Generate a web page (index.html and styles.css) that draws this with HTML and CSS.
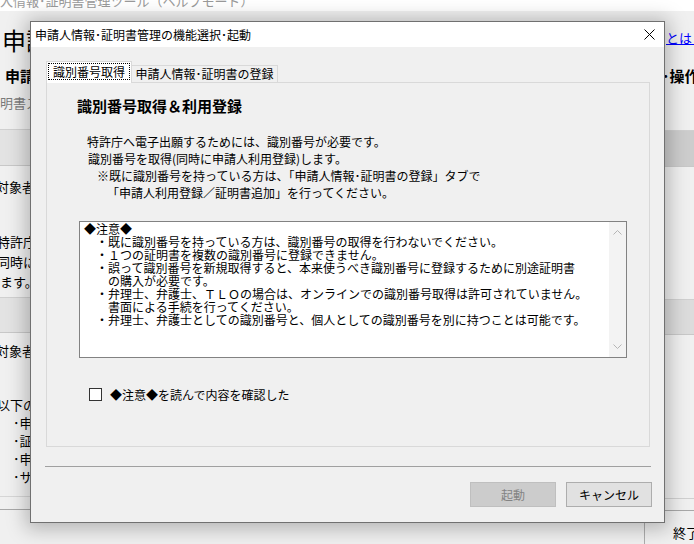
FILE: index.html
```html
<!DOCTYPE html>
<html>
<head>
    <meta http-equiv="Content-Type" content="text/html; charset=utf-8" />
    <title>申請人情報･証明書管理の機能選択･起動</title>
    <link rel="stylesheet" href="styles.css">
</head>
<body>
  <div class="app">
    <div class="app-title"><span>人情報･証明書管理ツール（ヘルプモード）</span></div>
    <div class="client">
      <div class="main-col">
        <div class="big-title">申請人情報</div>
        <div class="sub-title">申請人情報</div>
        <div class="note">明書スロット</div>
        <div class="band band-first"></div>
        <div class="row-label">対象者</div>
        <div class="para">
          <div>特許庁へ電子出願</div>
          <div>同時に申請人利用</div>
          <div class="flush">ます。</div>
        </div>
        <div class="band band-second"></div>
        <div class="row-label second">対象者</div>
        <div class="list">
          <div class="list-head">以下の</div>
          <div class="list-item">･申請人</div>
          <div class="list-item">･証明書</div>
          <div class="list-item">･申請人</div>
          <div class="list-item">･サービス</div>
        </div>
        <div class="rule rule-light"></div>
        <div class="rule rule-dark"></div>
      </div>

      <div class="side-col">
        <a class="help-link" href="#">とは？</a>
        <div class="side-title">･操作</div>
        <div class="band side-band-first"></div>
        <div class="band side-band-second"></div>
        <div class="rule side-rule-light"></div>
        <div class="rule side-rule-dark"></div>
        <div class="exit-button">終了</div>
      </div>
    </div>
  </div>

  <!-- 機能選択ダイアログ -->
  <div class="dialog">
    <div class="dialog-title">
      <span>申請人情報･証明書管理の機能選択･起動</span>
      <svg class="close-icon" width="11" height="11" viewBox="0 0 11 11">
        <path d="M0.5 0.5 L10.5 10.5 M10.5 0.5 L0.5 10.5" stroke="#000" stroke-width="1" fill="none"/>
      </svg>
    </div>

    <div class="dialog-body">
      <div class="tabs">
        <div class="tab active"><span class="focus">識別番号取得</span></div>
        <div class="tab">申請人情報･証明書の登録</div>
      </div>

      <div class="tab-panel">
        <div class="panel-heading">識別番号取得＆利用登録</div>
        <div class="intro">
          <div>特許庁へ電子出願するためには、識別番号が必要です。</div>
          <div class="indent-1">識別番号を取得(同時に申請人利用登録)します。</div>
          <div class="indent-2">※既に識別番号を持っている方は、「申請人情報･証明書の登録」タブで</div>
          <div class="indent-3">「申請人利用登録／証明書追加」を行ってください。</div>
        </div>

        <div class="notice-box">
          <div class="notice-text">◆注意◆
　・既に識別番号を持っている方は、識別番号の取得を行わないでください。
　・１つの証明書を複数の識別番号に登録できません。
　・誤って識別番号を新規取得すると、本来使うべき識別番号に登録するために別途証明書
　　の購入が必要です。
　・弁理士、弁護士、ＴＬＯの場合は、オンラインでの識別番号取得は許可されていません。
　　書面による手続を行ってください。
　・弁理士、弁護士としての識別番号と、個人としての識別番号を別に持つことは可能です。</div>
          <div class="scrollbar">
            <svg width="9" height="5" viewBox="0 0 9 5"><path d="M0.5 4.5 L4.5 0.5 L8.5 4.5" stroke="#b5b5b5" fill="none"/></svg>
            <svg width="9" height="5" viewBox="0 0 9 5"><path d="M0.5 0.5 L4.5 4.5 L8.5 0.5" stroke="#b5b5b5" fill="none"/></svg>
          </div>
        </div>

        <label class="confirm">
          <span class="checkbox"></span>
          <span>◆注意◆を読んで内容を確認した</span>
        </label>
      </div>

      <div class="separator"></div>

      <div class="footer">
        <button class="btn" disabled>起動</button>
        <button class="btn">キャンセル</button>
      </div>
    </div>
  </div>
</body>
</html>
```

FILE: styles.css
```css
body {
    margin: 0;
    width: 694px;
    height: 544px;
    overflow: hidden;
    position: relative;
    background-color: #f0f0f0;
    font-family: "Noto Sans CJK JP", sans-serif;
    font-size: 12px;
    color: #000;
}

/* 背面の親ウィンドウ */
.app-title {
    height: 11px;
    overflow: hidden;
    background-color: #fff;
    color: #9a9a9a;
    font-size: 13px;
}

.app-title span {
    display: block;
    line-height: 18px;
    margin-top: -8px;
}

.client {
    display: grid;
    grid-template-columns: 640px 54px;
}

.main-col,
.side-col {
    display: flex;
    flex-direction: column;
    white-space: nowrap;
}

.big-title {
    margin-top: 14px;
    padding-left: 2px;
    font-size: 24px;
    line-height: 30px;
}

.sub-title {
    margin-top: 11px;
    padding-left: 5px;
    font-size: 15px;
    font-weight: bold;
    line-height: 20px;
}

.note {
    margin-top: 9px;
    font-size: 13px;
    line-height: 16px;
    color: #7a7a7a;
}

.band {
    background-color: #e3e3e3;
    border-top: 1px solid #d0d0d0;
    border-bottom: 1px solid #c8c8c8;
}

.band-first {
    margin-top: 18px;
    height: 35px;
}

.row-label {
    margin-top: 12px;
    margin-left: -4px;
    font-size: 13px;
    line-height: 18px;
}

.row-label.second {
    margin-top: 9px;
}

.para {
    margin-top: 36px;
    margin-left: -3px;
    font-size: 13px;
    line-height: 20px;
}

.para .flush {
    margin-left: 3px;
}

.band-second {
    margin-top: 5px;
    height: 34px;
}

.list {
    margin-top: 36px;
    font-size: 13px;
    line-height: 18px;
}

.list-head {
    margin-left: -3px;
}

.list-item {
    margin-left: 13px;
}

.rule {
    height: 1px;
}

.rule-light {
    margin-top: 10px;
    background-color: #d6d6d6;
}

.rule-dark {
    margin-top: 12px;
    background-color: #a8a8a8;
}

.help-link {
    margin-top: 19px;
    padding-left: 26px;
    font-size: 13px;
    line-height: 16px;
    color: #0000ff;
}

.side-title {
    margin-top: 20px;
    padding-left: 22px;
    font-size: 15px;
    font-weight: bold;
    line-height: 20px;
}

.side-band-first {
    margin-top: 44px;
    height: 35px;
    background-color: #cdcdcd;
}

.side-band-second {
    margin-top: 132px;
    height: 34px;
    background-color: #dcdcdc;
}

.side-rule-light {
    margin-top: 163px;
    background-color: #d0d0d0;
}

.side-rule-dark {
    margin-top: 11px;
    background-color: #a8a8a8;
}

.exit-button {
    margin-left: 4px;
    height: 33px;
    border-left: 1px solid #adadad;
    padding-left: 28px;
    line-height: 44px;
    font-size: 13px;
}

/* ダイアログ */
.dialog {
    position: absolute;
    left: 30px;
    top: 21px;
    width: 633px;
    height: 500px;
    border: 1px solid #707070;
    background-color: #f0f0f0;
    box-shadow: 0 2px 18px 4px rgba(0, 0, 0, 0.25);
    display: flex;
    flex-direction: column;
}

.dialog-title {
    height: 25px;
    background-color: #fff;
    display: flex;
    align-items: center;
    justify-content: space-between;
    padding: 0 9px 0 4px;
    font-size: 12px;
}

.dialog-body {
    flex: 1;
    padding: 14px 14px 15px 15px;
    display: flex;
    flex-direction: column;
}

.tabs {
    display: flex;
    align-items: flex-end;
    height: 21px;
}

.tab {
    height: 16px;
    width: 145px;
    border: 1px solid #d9d9d9;
    border-bottom: none;
    background-color: #f0f0f0;
    text-align: center;
    line-height: 16px;
    margin-left: -1px;
}

.tab.active {
    position: relative;
    z-index: 1;
    width: 84px;
    height: 21px;
    margin-left: 0;
    margin-bottom: -1px;
    background-color: #fff;
}

.focus {
    display: block;
    margin: 1px 1px 0 1px;
    height: 15px;
    border: 1px dotted #000;
    line-height: 15px;
}

.tab-panel {
    height: 363px;
    border: 1px solid #d9d9d9;
    display: flex;
    flex-direction: column;
    align-items: flex-start;
}

.panel-heading {
    margin-top: 14px;
    margin-left: 30px;
    font-size: 15px;
    font-weight: bold;
    line-height: 18px;
}

.intro {
    margin-top: 18px;
    margin-left: 40px;
    line-height: 17px;
}

.indent-1 {
    padding-left: 1px;
}

.indent-2 {
    padding-left: 10px;
}

.indent-3 {
    padding-left: 20px;
}

.notice-box {
    margin-top: 20px;
    margin-left: 32px;
    width: 546px;
    height: 135px;
    border: 1px solid #828282;
    background-color: #fff;
    display: flex;
}

.notice-text {
    flex: 1;
    padding: 0 0 0 4px;
    white-space: pre;
    line-height: 13px;
    overflow: hidden;
}

.scrollbar {
    width: 17px;
    background-color: #f3f3f3;
    display: flex;
    flex-direction: column;
    justify-content: space-between;
    align-items: center;
    padding: 8px 0;
}

.confirm {
    margin-top: 29px;
    margin-left: 42px;
    display: flex;
    align-items: center;
    gap: 8px;
    line-height: 15px;
}

.checkbox {
    width: 11px;
    height: 11px;
    border: 1px solid #333;
    background-color: #fff;
}

.separator {
    margin-top: 19px;
    margin-left: -1px;
    margin-right: -1px;
    height: 1px;
    background-color: #a0a0a0;
}

.footer {
    margin-top: 15px;
    margin-right: -2px;
    display: flex;
    justify-content: flex-end;
    gap: 10px;
}

.btn {
    width: 86px;
    height: 25px;
    border: 1px solid #adadad;
    background-color: #e1e1e1;
    font-family: "Noto Sans CJK JP", sans-serif;
    font-size: 12px;
    color: #000;
    padding: 0;
}

.btn:disabled {
    border-color: #bfbfbf;
    background-color: #cccccc;
    color: #838383;
}
```
